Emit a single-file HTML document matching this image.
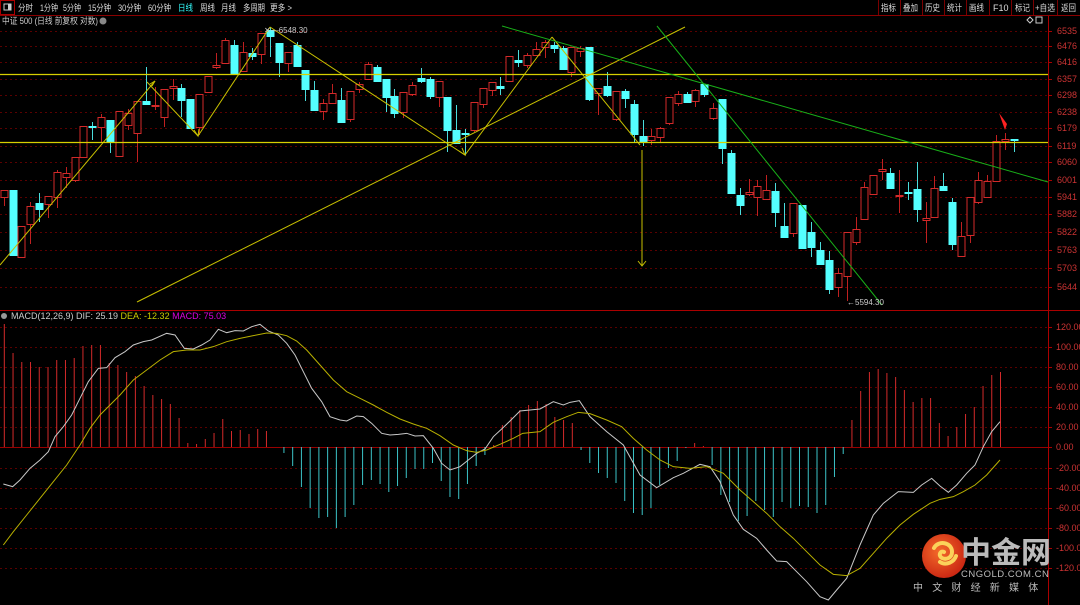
<!DOCTYPE html>
<html><head><meta charset="utf-8"><style>
html,body{margin:0;padding:0;background:#000;width:1080px;height:605px;overflow:hidden;font-family:"Liberation Sans","Noto Sans CJK SC",sans-serif}
svg{position:absolute;left:0;top:0}
</style></head><body>
<svg id="s" width="1080" height="605" viewBox="0 0 1080 605" xmlns="http://www.w3.org/2000/svg" font-family="Liberation Sans, Noto Sans CJK SC, sans-serif">
<rect width="1080" height="605" fill="#000"/>
<g id="grid"></g>
<g id="cand"></g>
<g id="hist"></g>
<g id="lines"></g>
<!-- toolbar -->
<line x1="0" y1="15.5" x2="1080" y2="15.5" stroke="#8b0000"/>
<rect x="0.5" y="0.5" width="14" height="14" fill="none" stroke="#a00"/>
<rect x="4" y="4" width="7" height="6" fill="none" stroke="#ccc"/>
<rect x="8" y="4" width="3" height="6" fill="#ccc"/>
<g font-size="9" fill="#ddd" lengthAdjust="spacingAndGlyphs">
<text x="18" y="11" textLength="15" lengthAdjust="spacingAndGlyphs">分时</text><text x="40" y="11" textLength="18" lengthAdjust="spacingAndGlyphs">1分钟</text><text x="63" y="11" textLength="18" lengthAdjust="spacingAndGlyphs">5分钟</text><text x="88" y="11" textLength="23" lengthAdjust="spacingAndGlyphs">15分钟</text><text x="118" y="11" textLength="23" lengthAdjust="spacingAndGlyphs">30分钟</text><text x="148" y="11" textLength="23" lengthAdjust="spacingAndGlyphs">60分钟</text>
<text x="178" y="11" fill="#3ff" textLength="15" lengthAdjust="spacingAndGlyphs">日线</text><text x="200" y="11" textLength="15" lengthAdjust="spacingAndGlyphs">周线</text><text x="221" y="11" textLength="15" lengthAdjust="spacingAndGlyphs">月线</text><text x="243" y="11" textLength="22" lengthAdjust="spacingAndGlyphs">多周期</text><text x="270" y="11" textLength="22" lengthAdjust="spacingAndGlyphs">更多 &gt;</text>
<text x="881" y="11" textLength="15" lengthAdjust="spacingAndGlyphs">指标</text><text x="903" y="11" textLength="15" lengthAdjust="spacingAndGlyphs">叠加</text><text x="925" y="11" textLength="15" lengthAdjust="spacingAndGlyphs">历史</text><text x="947" y="11" textLength="15" lengthAdjust="spacingAndGlyphs">统计</text><text x="969" y="11" textLength="15" lengthAdjust="spacingAndGlyphs">画线</text><text x="993" y="11">F10</text><text x="1015" y="11" textLength="15" lengthAdjust="spacingAndGlyphs">标记</text><text x="1035" y="11" textLength="20" lengthAdjust="spacingAndGlyphs">+自选</text><text x="1061" y="11" textLength="15" lengthAdjust="spacingAndGlyphs">返回</text>
</g>
<g stroke="#7a0000"><line x1="878.5" y1="0" x2="878.5" y2="15"/><line x1="900.5" y1="0" x2="900.5" y2="15"/><line x1="922.5" y1="0" x2="922.5" y2="15"/><line x1="944.5" y1="0" x2="944.5" y2="15"/><line x1="966.5" y1="0" x2="966.5" y2="15"/><line x1="989.5" y1="0" x2="989.5" y2="15"/><line x1="1011.5" y1="0" x2="1011.5" y2="15"/><line x1="1033.5" y1="0" x2="1033.5" y2="15"/><line x1="1057.5" y1="0" x2="1057.5" y2="15"/></g>
<text x="2" y="24" font-size="9" fill="#ccc" textLength="96" lengthAdjust="spacingAndGlyphs">中证 500 (日线 前复权 对数)</text>
<circle cx="103" cy="21" r="3.5" fill="#888"/>
<path d="M1027 20l3 3 3-3-3-3z" fill="none" stroke="#ccc"/><rect x="1036" y="17" width="6" height="6" fill="none" stroke="#ccc"/>
<!-- axis -->
<line x1="1048.5" y1="16" x2="1048.5" y2="605" stroke="#a00"/>
<line x1="0" y1="310.5" x2="1080" y2="310.5" stroke="#a00"/>
<g id="axis" font-size="9" fill="#c33"></g>
<!-- MACD header -->
<circle cx="4" cy="316" r="3" fill="#999"/>
<text x="11" y="319" font-size="9" fill="#ccc">MACD(12,26,9) DIF: 25.19 <tspan fill="#cc0">DEA: -12.32</tspan> <tspan fill="#d0d">MACD: 75.03</tspan></text>
<!-- labels -->
<text x="264" y="33" font-size="8" fill="#ccc">✕—6548.30</text>
<text x="847" y="305" font-size="8" fill="#ccc">←5594.30</text>
<path d="M999 113l6 17 2-6z" fill="#f22"/>
<!-- logo -->
<defs><radialGradient id="g" cx="0.4" cy="0.4" r="0.7"><stop offset="0" stop-color="#f46a2a"/><stop offset="1" stop-color="#c51f10"/></radialGradient></defs>
<circle cx="944" cy="556" r="22" fill="url(#g)"/>
<path d="M934 548c4-8 18-6 18 4 0 6-6 8-10 6-4-2-2-8 2-6M940 562c6 4 14 0 16-6" fill="none" stroke="#fbd35a" stroke-width="4" stroke-linecap="round"/>
<text x="961" y="563" font-size="30" font-weight="bold" fill="#bbb" font-family="Noto Sans CJK SC, sans-serif">中金网</text>
<text x="961" y="577" font-size="9.5" fill="#bbb" letter-spacing="0.5">CNGOLD.COM.CN</text>
<text x="913" y="591" font-size="10" fill="#bbb" letter-spacing="9.2" font-family="Noto Sans CJK SC, sans-serif">中文财经新媒体</text>
</svg>
<script>
var NS="http://www.w3.org/2000/svg";
function el(p,t,a){var e=document.createElementNS(NS,t);for(var k in a)e.setAttribute(k,a[k]);document.getElementById(p).appendChild(e);return e;}
var py=[31,46,62,79,95,112,128,146,162,180,197,214,232,250,268,287],pl=["6535","6476","6416","6357","6298","6238","6179","6119","6060","6001","5941","5882","5822","5763","5703","5644"];
py.forEach(function(y,i){el("grid","line",{x1:0,x2:1048,y1:y+.5,y2:y+.5,stroke:"#5a0000","stroke-dasharray":"2 3"});el("axis","line",{x1:1048,x2:1052,y1:y+.5,y2:y+.5,stroke:"#a00"});var t=el("axis","text",{x:1057,y:y+3});t.textContent=pl[i];});
var my=[327,347,367,387,407,427,447,468,488,508,528,548,568],ml=["120.00","100.00","80.00","60.00","40.00","20.00","0.00","-20.00","-40.00","-60.00","-80.00","-100.00","-120.00"];
my.forEach(function(y,i){el("grid","line",{x1:0,x2:1048,y1:y+.5,y2:y+.5,stroke:"#5a0000","stroke-dasharray":"2 3"});el("axis","line",{x1:1048,x2:1052,y1:y+.5,y2:y+.5,stroke:"#a00"});var t=el("axis","text",{x:1056,y:y+3});t.textContent=ml[i];});
el("grid","line",{x1:0,x2:1048,y1:447.5,y2:447.5,stroke:"#900"});
var C=[[4,'r',190,197,190,206],[13,'c',190,255,190,255],[21,'r',226,257,226,258],[30,'r',206,224,202,244],[39,'c',203,209,193,222],[48,'r',196,204,196,218],[57,'r',172,197,170,208],[66,'r',173,177,167,188],[75,'r',157,180,157,182],[83,'r',126,157,126,157],[92,'c',126,127,122,140],[101,'r',117,127,114,143],[110,'c',120,142,120,153],[119,'r',111,156,111,156],[128,'r',113,125,109,130],[137,'r',101,133,101,162],[146,'c',101,104,67,104],[155,'r',105,106,87,110],[164,'r',89,117,89,127],[173,'r',86,88,79,100],[181,'c',88,100,84,117],[190,'c',99,128,99,128],[199,'r',94,127,94,135],[208,'r',76,92,76,92],[216,'r',65,67,53,69],[225,'r',40,63,38,63],[234,'c',45,73,40,73],[243,'r',52,71,42,71],[252,'c',53,56,48,60],[261,'r',33,54,33,64],[270,'c',30,36,27,57],[279,'c',43,62,43,77],[288,'r',52,63,52,72],[297,'c',45,66,42,66],[305,'c',70,89,70,101],[314,'c',90,110,81,110],[323,'r',103,111,99,120],[332,'r',93,103,84,103],[341,'c',100,122,88,122],[350,'r',91,119,91,122],[359,'r',84,89,82,93],[368,'r',64,79,62,80],[377,'c',67,81,65,81],[386,'c',79,97,79,112],[394,'c',96,113,89,118],[403,'r',92,112,92,118],[412,'r',85,94,82,96],[421,'c',78,81,68,83],[430,'c',79,96,77,99],[439,'r',81,97,81,107],[447,'c',97,130,97,152],[456,'c',130,143,105,143],[465,'c',133,134,129,155],[474,'r',102,130,102,132],[483,'r',88,104,88,108],[492,'r',82,90,82,96],[500,'c',86,88,77,95],[509,'r',56,81,56,82],[518,'c',60,62,50,67],[527,'r',55,65,53,68],[536,'r',49,55,42,55],[545,'r',42,47,40,58],[554,'c',45,48,42,53],[563,'c',48,69,46,69],[571,'r',47,72,47,77],[580,'r',48,51,46,57],[589,'c',47,99,47,101],[598,'r',88,93,88,115],[607,'c',86,95,72,97],[616,'r',91,119,91,121],[625,'c',91,98,89,108],[634,'c',104,134,100,142],[643,'c',136,142,120,146],[651,'r',136,140,129,145],[660,'r',128,137,127,143],[669,'r',97,123,97,125],[678,'r',94,103,91,106],[687,'c',94,102,92,103],[695,'r',90,101,89,107],[704,'c',84,94,84,97],[713,'r',108,118,103,120],[722,'c',99,148,99,164],[731,'c',153,193,150,193],[740,'c',195,205,188,215],[749,'r',192,194,179,196],[757,'r',186,197,180,216],[766,'r',190,199,175,199],[775,'c',191,212,183,227],[784,'c',226,237,203,238],[793,'r',203,233,203,237],[802,'c',205,248,205,248],[811,'c',232,247,222,257],[820,'c',250,264,242,264],[829,'c',260,289,251,294],[838,'r',273,287,268,297],[847,'r',232,276,232,301],[856,'r',229,242,217,245],[864,'r',187,219,182,219],[873,'r',175,194,175,194],[882,'r',169,171,159,180],[890,'c',173,188,168,188],[899,'r',195,196,170,213],[908,'c',192,193,182,200],[917,'c',189,209,162,222],[926,'r',218,220,202,243],[934,'r',188,217,176,217],[943,'c',186,190,173,190],[952,'c',202,244,198,250],[961,'r',236,256,222,256],[970,'r',197,235,197,243],[978,'r',180,202,172,204],[987,'r',181,197,175,197],[996,'r',141,181,135,181],[1005,'r',139,141,133,150],[1014,'c',139,140,139,152]];
C.forEach(function(c){var x=c[0],col=c[1]=='r'?'#d42a2a':'#54ffff';el("cand","line",{x1:x+.5,x2:x+.5,y1:c[4],y2:c[5],stroke:c[1]=='r'?'#c02020':'#4bdcdc'});
var h=Math.max(1,c[3]-c[2]);if(c[1]=='r'){el("cand","rect",{x:x-3,y:c[2]+.5,width:7,height:h,fill:"#000",stroke:col});}else{el("cand","rect",{x:x-3.5,y:c[2],width:8,height:h+1,fill:col});}});
var H=[123,94,85,85,80,80,87,87,89,101,102,102,84,82,75,71,61,52,48,43,29,4,3,8,14,28,16,17,13,18,16,0,-6,-19,-40,-61,-71,-70,-81,-70,-58,-38,-33,-37,-45,-39,-31,-22,-22,-16,-34,-50,-52,-37,-19,-8,2,22,30,37,42,46,43,30,27,24,-3,-16,-26,-31,-36,-54,-66,-68,-61,-38,-21,-14,-1,4,1,-18,-48,-55,-74,-69,-54,-63,-70,-55,-61,-59,-60,-66,-58,-30,-7,27,56,75,78,74,70,57,45,49,49,24,11,20,33,40,61,72,75];
var sp=(1000.5-4.3)/(H.length-1);
H.forEach(function(v,i){var x=4.3+sp*i;if(v==0)return;el("hist","line",{x1:x,x2:x,y1:447,y2:447-v,stroke:v>0?'#d42a2a':'#3cc4c8'});});
function L(a,st,w){el("lines","polyline",{points:a.map(function(p){return p.join(",")}).join(" "),fill:"none",stroke:st,"stroke-width":w||1});}
var Y="#c8c000";
L([[0,265],[155,81]],Y);L([[147,82],[198,136]],Y);L([[198,136],[270,27]],Y);L([[270,27],[465,155]],Y);L([[465,155],[552,37]],Y);L([[552,37],[640,145]],Y);
L([[137,302],[685,27]],Y);L([[642,150],[642,266]],Y);L([[638,261],[642,266],[646,261]],Y);
L([[150,84],[155,81],[152,86]],Y);L([[194,130],[198,136],[199,129]],Y);L([[459,151],[465,155],[462,148]],Y);
L([[0,74.5],[1048,74.5]],"#d8d000",1.2);L([[0,142.5],[1048,142.5]],"#d8d000",1.2);
L([[502,26],[1048,182]],"#19b019");L([[657,26],[882,305]],"#19b019");
function T(a,ox,oy){return a.map(function(p){return [p[0]/3+ox,p[1]/3+oy]});}
var W1=[[10,537],[38,545],[60,525],[90,490],[120,465],[145,440],[165,395],[190,365],[215,330],[240,280],[265,230],[295,190],[320,188],[345,158],[375,140],[400,120],[430,110],[455,105],[500,85],[525,90],[553,130],[580,132],[605,120],[630,105],[655,73],[680,83],[705,77],[730,78],[755,65],[780,58],[805,78],[835,90],[860,115],[885,150],[910,200],[935,250],[965,290],[990,335],[1020,345],[1040,348],[1070,333],[1090,335],[1115,355],[1145,385],[1170,390],[1195,388],[1220,385],[1245,393],[1270,392],[1300,430],[1325,475],[1350,495],[1380,485],[1405,465],[1430,445],[1455,432],[1480,395],[1505,372],[1530,348],[1560,318]];
var W2=[[0,312],[40,290],[70,300],[90,292],[118,287],[150,335],[200,380],[250,420],[300,510],[350,548],[400,518],[430,505],[480,478],[510,485],[540,530],[580,630],[610,673],[650,700],[680,735],[710,768],[740,770],[770,800],[800,830],[840,875],[865,885],[890,855],[920,820],[960,720],[1000,630],[1030,595],[1075,560],[1120,562],[1145,540],[1175,520],[1200,543],[1225,562],[1250,540],[1280,505],[1305,480],[1330,425],[1355,380],[1380,350]];
var D1=[[10,720],[40,680],[80,630],[120,580],[160,530],[200,480],[240,420],[270,370],[300,330],[330,300],[360,270],[400,225],[440,195],[480,165],[520,140],[560,135],[600,135],[640,125],[680,110],[720,100],[760,92],[800,84],[830,85],[860,92],[890,108],[920,135],[960,180],[1000,225],[1040,260],[1080,280],[1120,300],[1160,322],[1200,342],[1240,357],[1280,370],[1320,392],[1360,420],[1400,437],[1430,442],[1460,435],[1500,418],[1540,400],[1568,385]];
var D2=[[0,380],[40,352],[80,335],[115,322],[150,326],[200,345],[245,365],[280,400],[320,435],[360,465],[400,485],[450,490],[500,485],[550,505],[600,555],[640,590],[680,625],[720,665],[760,700],[800,740],[840,780],[880,808],[920,812],[960,790],[1000,745],[1040,700],[1080,660],[1120,628],[1170,595],[1200,583],[1240,575],[1270,560],[1305,540],[1340,510],[1380,465]];
L(T(W1,0,305).concat(T(W2,540,305)),"#c8c8c8");
L(T(D1,0,305).concat(T(D2,540,305)),"#b8b000");
</script>
</body></html>
